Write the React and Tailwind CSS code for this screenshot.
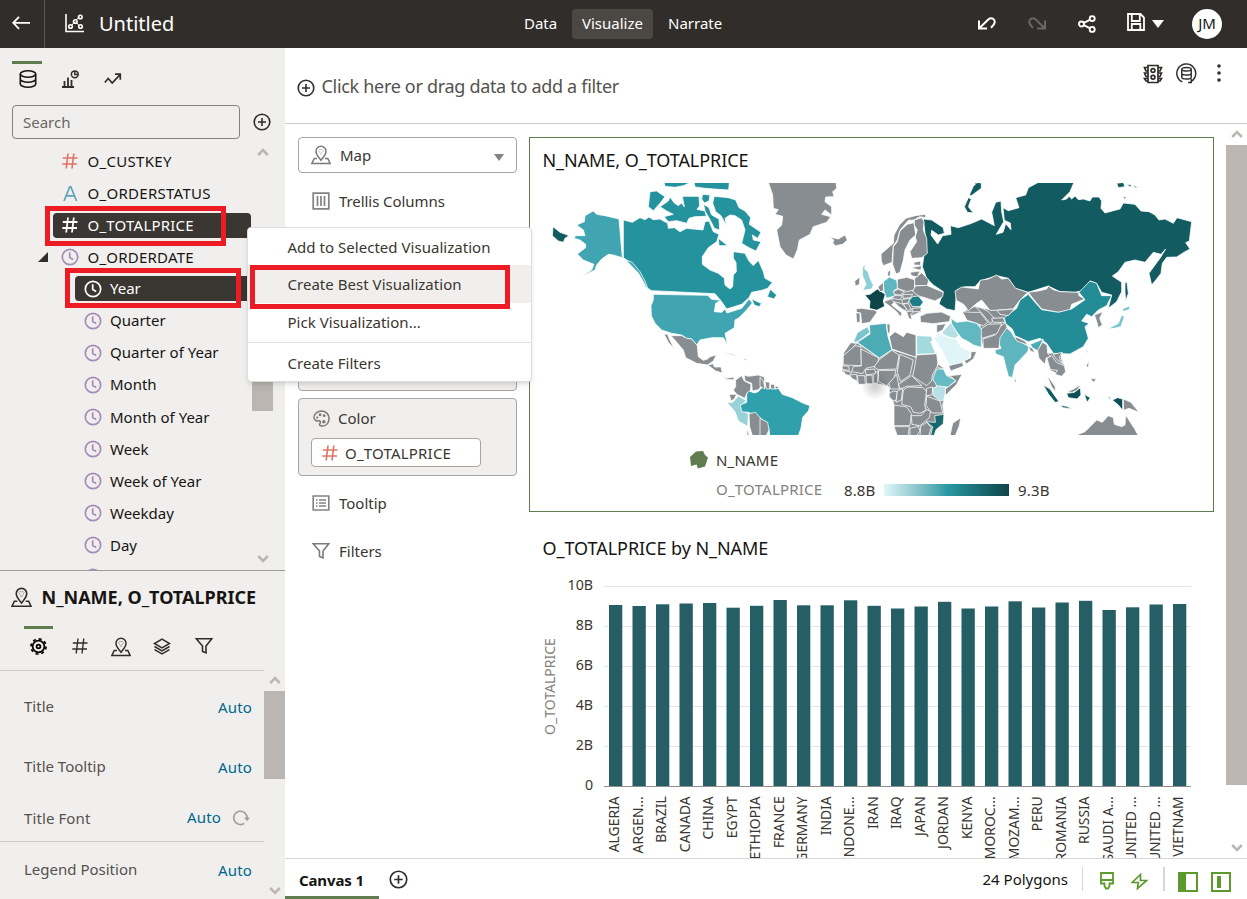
import React from "react";

const G = "#888d91";

const Svg = ({ w = 20, h = w, vb = "0 0 20 20", className = "", sw = 1.5, children }) => (
  <svg width={w} height={h} viewBox={vb} fill="none" stroke="currentColor" strokeWidth={sw} className={"shrink-0 " + className}>
    {children}
  </svg>
);

const Hash = ({ className = "", s = 16, sw = 1.6 }) => (
  <Svg w={s} vb="0 0 16 16" className={className} sw={sw}><path d="M6 0.5 4.2 15.5M11.8 0.5 10 15.5M0.8 5h14.7M0.3 11h14.7" /></Svg>
);
const Clock = ({ className = "" }) => (
  <Svg w={18} vb="0 0 18 18" className={className} sw={1.7}><circle cx="9" cy="9" r="7.7" /><path d="M8.7 4.2v5.2l3.5 2" /></Svg>
);
const Pin = ({ className = "", w = 20 }) => (
  <Svg w={w} className={className} sw={1.5}>
    <path d="M10 15.2C7.500 12 5 9.800 5 6.300a5 5 0 0 1 10 0C15 9.800 12.500 12 10 15.200z" />
    <path d="M6 13.500H3.200L.9 18.400h18.200l-2.300-4.900H14" />
    <path d="M7.300 5 10 9.500l2.700-4.500M8 4.500h4" strokeWidth=".5" opacity=".7" />
  </Svg>
);
const Funnel = ({ className = "" }) => (
  <Svg w={18} vb="0 0 18 18" className={className} sw={1.6}><path d="M1.200 1.700h15.600L11 9v6.800L7.500 14.500V9z" /></Svg>
);
const PlusCircle = ({ className = "", w = 18 }) => (
  <Svg w={w} vb="0 0 18 18" className={className} sw={1.6}><circle cx="9" cy="9" r="7.800" /><path d="M9 5v8M5 9h8" /></Svg>
);
const Arrow = ({ up, className = "" }) => (
  <Svg w={12} h={8} vb="0 0 12 8" className={"text-[#bbb6b2] " + className} sw={2.6}>
    <path d={up ? "M1.200 7 6 2.200 10.800 7" : "M1.200 1 6 5.800 10.800 1"} />
  </Svg>
);

const Header = () => (
  <header className="flex h-12 shrink-0 items-center bg-[#312d2a] pb-px text-white">
    <div className="-mb-px flex h-12 w-[45px] items-center border-r border-[#5d5956] pl-3">
      <Svg w={19} h={14} vb="0 0 19 14" className="mb-0.5" sw={1.8}><path d="M7 .8 1.200 6.800 7 12.800M1.200 6.800H18" /></Svg>
    </div>
    <Svg w={19} vb="0 0 19 19" className="ml-5" sw={1.6}>
      <path d="M1 0v17.500h18" /><path d="m6 12 4-4.500M11.500 8.500l2.500 3M11 6l3.500-3" strokeWidth="1" />
      <circle cx="5.500" cy="12.500" r="1.800" /><circle cx="10.300" cy="7.500" r="1.800" /><circle cx="15.300" cy="3" r="1.800" /><circle cx="15.500" cy="12.500" r="1.800" />
    </Svg>
    <div className="ml-[15px] w-[425px] text-[20px] leading-[48px]">Untitled</div>
    <div className="w-[48px] text-[15px]">Data</div>
    <div className="flex h-[30px] w-[81px] items-center justify-center rounded bg-[#4b4743] text-[15px]">Visualize</div>
    <div className="ml-[15px] w-[310px] text-[15px]">Narrate</div>
    <Svg w={18} h={13} vb="0 0 18 13" sw={2}><path d="M1 3.500v8h8M1.800 10.800 10.500 2.300c3-2.600 6.500 0 6.200 3-.2 2-1.500 3.200-3.700 5.500" /></Svg>
    <Svg w={18} h={13} vb="0 0 18 13" className="ml-8 text-[#6b6764]" sw={2}><path d="M17 3.500v8H9M16.200 10.800 7.500 2.300c-3-2.600-6.500 0-6.200 3 .2 2 1.500 3.200 3.700 5.500" /></Svg>
    <Svg w={18} vb="0 0 18 18" className="ml-8" sw={1.900}><circle cx="3.500" cy="9" r="2.500" /><circle cx="14.200" cy="3.600" r="2.500" /><circle cx="14.200" cy="14.400" r="2.500" /><path d="m5.800 7.800 6-3M5.800 10.200l6 3" /></Svg>
    <Svg w={18} h={18} vb="0 0 18 18" className="mb-[3px] ml-[31px]" sw={1.800}><path d="M1 1h12.500L17 4.500V17H1zM4.800 1v7h8V1M4.800 17v-6h8.500v6" /></Svg>
    <Svg w={12} h={8} vb="0 0 12 8" className="ml-[7px]" sw={0}><path d="M0 0h12L6 8z" fill="currentColor" /></Svg>
    <div className="ml-7 flex h-[30px] w-[30px] items-center justify-center rounded-full bg-white text-[15px] text-[#161513]">JM</div>
  </header>
);

const parts = ["Quarter", "Quarter of Year", "Month", "Month of Year", "Week", "Week of Year", "Weekday", "Day"];

const DataPanel = () => (
  <section className="flex h-[523px] shrink-0 flex-col border-b border-[#a09c99]">
    <div className="ml-3 mt-[13px] h-[3px] w-[30px] bg-[#5f7d4f]" />
    <div className="flex h-[41px] items-center pb-3 pl-[19px] text-[#312d2a]">
      <Svg w={18} h={18} vb="0 0 18 18" className="text-[#161513]" sw={1.600}>
        <ellipse cx="9" cy="4" rx="7.700" ry="3.200" /><path d="M1.300 4v10c0 1.800 3.500 3.200 7.700 3.200s7.700-1.400 7.700-3.200V4M1.300 9c0 1.800 3.500 3.200 7.700 3.200s7.700-1.400 7.700-3.200" />
      </Svg>
      <Svg w={17} h={18} vb="0 0 17 18" className="ml-[25px]" sw={1.500}>
        <path d="M0 17h12M2.500 16v-5M6 16V7.500M9.500 16v-6" strokeWidth="1.800" /><circle cx="12.800" cy="4.300" r="3.400" /><path d="M12.800 1v3.500h3.400" />
      </Svg>
      <Svg w={18} h={12} vb="0 0 18 12" className="ml-[25px]" sw={1.700}><path d="m.8 9.500 3.400-4 4 4.500L16.500 1.200M11 1.200h5.300v5.500" /></Svg>
    </div>
    <div className="flex items-center">
      <div className="ml-3 flex h-[34px] w-[228px] items-center rounded border border-[#85817e] pl-[10px] text-[15px] text-[#6a6663]">Search</div>
      <PlusCircle className="ml-[13px] text-[#312d2a]" />
    </div>
    <div className="flex h-[431px] overflow-hidden">
      <div className="w-[252px] shrink-0 pt-[6px] text-[15px] text-[#161513]">
        <div className="flex h-8 items-center pl-[62px]"><Hash className="text-[#dd7567]" /><span className="ml-[9.500px] tracking-[0.300px]">O_CUSTKEY</span></div>
        <div className="flex h-8 items-center pl-[63px]"><Svg w={15} h={15} vb="0 0 15 15" className="text-[#62a0b8]" sw={1.700}><path d="M1 15 6.800.8h1L13.600 15M3 9.800h8.500" /></Svg><span className="ml-[9.500px] tracking-[0.280px]">O_ORDERSTATUS</span></div>
        <div className="flex h-8 items-center pl-[53px]">
          <div className="flex h-[25px] w-[198px] items-center rounded bg-[#3a3631] pl-[9px] text-white"><Hash sw={1.800} /><span className="ml-[9.500px] tracking-[0.220px]">O_TOTALPRICE</span></div>
        </div>
        <div className="flex h-8 items-center pl-[38px]">
          <svg width="10" height="10" viewBox="0 0 10 10"><path d="M10 0v10H0z" fill="#312d2a" /></svg>
          <Clock className="ml-[13px] text-[#a78bb8]" /><span className="ml-[8.500px] tracking-[0.220px]">O_ORDERDATE</span>
        </div>
        <div className="flex h-8 items-center pb-px pl-[75px]">
          <div className="flex h-[25px] w-[177px] items-center rounded-l bg-[#3a3631] pl-[9px] text-white"><Clock /><span className="ml-2">Year</span></div>
        </div>
        <div className="-mt-[0.500px]">
          {parts.map((p) => (
            <div key={p} className="flex h-[32.100px] items-center pl-[84px]"><Clock className="text-[#a78bb8]" /><span className="ml-2">{p}</span></div>
          ))}
          <div className="flex h-8 items-center pl-[84px]"><Clock className="text-[#a78bb8]" /></div>
        </div>
      </div>
      <div className="flex w-[21px] flex-col items-center pt-[9px]">
        <Arrow up />
        <div className="mt-[198px] h-[57px] w-full shrink-0 bg-[#bbb6b2]" />
        <Arrow className="mt-[144px]" />
      </div>
    </div>
  </section>
);

const Prop = ({ name, h, extra, bar }) => (
  <div className={"flex items-center justify-between pl-6 text-[15px] " + h + (bar ? " border-b border-[#cfccc9]" : "")}>
    <span className={"text-[#55514e]" + (extra ? " pt-0.5 tracking-[0.100px]" : " pb-0.5")}>{name}</span>
    <span className="flex items-center pr-3 tracking-[0.150px] text-[#00688c]">
      Auto
      {extra && <Svg w={17} vb="0 0 16 16" className="ml-3 mr-[2px] text-[#a09c99]" sw={1.500}><path d="M10.500 13.600A6.300 6.300 0 1 1 13.300 8.500" /><path d="M10.500 8h5.500l-2.700 3.600z" fill="currentColor" stroke="none" /></Svg>}
    </span>
  </div>
);

const Settings = () => (
  <section className="flex min-h-0 flex-1 flex-col">
    <div className="flex h-[53px] items-center pb-px pl-[11px]"><Pin className="text-[#312d2a]" w={21} /><span className="ml-[9.500px] pt-px text-[18px] font-bold text-[#161513]">N_NAME, O_TOTALPRICE</span></div>
    <div className="ml-6 mt-0.5 h-[3px] w-[29px] bg-[#5f7d4f]" />
    <div className="flex h-[42px] w-[264px] shrink-0 items-start border-b border-[#cfccc9] pl-[30px] pt-[9px] text-[#312d2a]">
      <Svg w={17} vb="0 0 18 18" className="text-black" sw={1.900}>
        <circle cx="9" cy="9" r="6.200" /><circle cx="9" cy="9" r="8" strokeDasharray="3.140 3.140" strokeWidth="1.800" /><circle cx="9" cy="9" r="2" />
      </Svg>
      <Hash className="ml-[25px]" sw={1.400} />
      <Pin className="-mt-px ml-[23px]" w={20} />
      <Svg w={18} vb="0 0 18 18" className="ml-[22px]" sw={1.500}><path d="M9 1.200 16.500 5.500 9 9.800 1.500 5.500zM1.500 8.500 9 12.800l7.500-4.300M1.500 11.700 9 16l7.500-4.300" /></Svg>
      <Funnel className="-mt-px ml-[23.500px]" />
    </div>
    <div className="flex min-h-0 flex-1">
      <div className="w-[264px] shrink-0 overflow-hidden">
        <Prop name="Title" h="h-[73px]" />
        <Prop name="Title Tooltip" h="h-[47px]" />
        <Prop name="Title Font" h="h-[51px] pt-0.5" extra bar />
        <Prop name="Legend Position" h="h-[57px]" />
      </div>
      <div className="flex w-[21px] flex-col items-center pt-[5px]">
        <Arrow up />
        <div className="mt-[7px] h-[88px] w-full shrink-0 bg-[#bbb6b2]" />
        <Arrow className="mt-[108px]" />
      </div>
    </div>
  </section>
);

const Grammar = () => (
  <div className="ml-[13px] flex w-[219px] shrink-0 flex-col pt-[13px] text-[15px] text-[#3a3631]">
    <div className="flex h-9 items-center rounded border border-[#a8a4a1] pl-3">
      <Pin className="text-[#7d7976]" w={20} /><span className="ml-[9px]">Map</span>
      <svg width="10" height="7" viewBox="0 0 10 7" className="ml-auto mr-3 mt-1"><path d="M0 0h10L5 7z" fill="#85817e" /></svg>
    </div>
    <div className="mt-[18px] flex h-5 items-center pl-[14px]">
      <Svg w={18} vb="0 0 18 18" className="text-[#85817e]" sw={1.700}><path d="M1.200 1.200h15.600v15.600H1.200zM5.500 4v10M9 4v10M12.500 4v10" /></Svg><span className="ml-[9px] tracking-[-0.070px]">Trellis Columns</span>
    </div>
    <div className="mt-[29px] h-[151px] rounded border border-[#a8a4a1] bg-[#f1efed]" />
    <div className="mt-[7px] h-[78px] rounded border border-[#a8a4a1] bg-[#f1efed] pl-3 pt-[9px]">
      <div className="flex h-5 items-center pl-0.5">
        <Svg w={17} vb="0 0 18 18" className="text-[#7d7976]" sw={1.600}>
          <path d="M1 8.500C.8 4.500 4.500 1 9 1s8 3.500 8 8-3 8-6.500 8c-4.500 0-4-1.500-3-3s0-3-1.500-2.500S1.200 11 1 8.500z" />
          <g fill="currentColor" stroke="none"><circle cx="7.500" cy="5" r="1.500" /><circle cx="11.800" cy="6" r="1.500" /><circle cx="11.500" cy="12.500" r="1.800" /><circle cx="4.500" cy="8" r="1.200" /></g>
        </Svg><span className="ml-[8px]">Color</span>
      </div>
      <div className="mt-[10px] flex h-[29px] w-[170px] items-center rounded border border-[#a8a4a1] bg-white pl-[10px]"><Hash className="text-[#dd7567]" /><span className="ml-[7px] pt-px tracking-[0.200px]">O_TOTALPRICE</span></div>
    </div>
    <div className="mt-[17px] flex h-5 items-center pl-[14px]">
      <Svg w={18} vb="0 0 18 18" className="text-[#85817e]" sw={1.600}><path d="M1.200 2h15.600v14H1.200zM4 6h1.500M7 6h7M4 9h1.500M7 9h7M4 12h1.500M7 12h7" /></Svg><span className="ml-[9px]">Tooltip</span>
    </div>
    <div className="mt-7 flex h-5 items-center pl-[14px]"><Funnel className="text-[#7d7976]" /><span className="ml-[9px]">Filters</span></div>
  </div>
);

/* Country outlines, three units to a pixel, in three longitude bands. */
const west = [
  ["#25939e", "357,22 438,22 415,32 390,37 360,34"],
  ["#25939e", "447,22 553,22 551,45 520,43 480,40 450,36"],
  ["#25939e", "315,50 335,48 360,65 345,85 325,107 310,95"],
  ["#25939e", "345,95 370,78 375,66 388,84 400,92 410,84 418,96 412,64 462,64 464,92 456,103 480,108 484,124 450,125 432,130 425,145 395,137 370,140 357,125 385,118 365,108"],
  ["#25939e", "473,58 495,60 492,78 478,84 470,72"],
  ["#25939e", "476,88 492,98 500,120 522,132 524,165 508,160 494,132 480,108"],
  ["#25939e", "508,64 550,68 572,75 582,98 600,108 617,128 613,148 648,172 638,190 622,180 625,195 648,200 633,228 612,218 590,205 600,165 590,135 570,122 555,120 540,130 545,152 528,122 512,110 503,84"],
  ["#25939e", "520,190 548,212 522,212"],
  ["#25939e", "235,135 262,142 285,128 300,134 312,126 325,134 345,132 368,145 370,160 388,158 405,170 425,160 474,165 480,140 492,138 505,170 522,178 515,200 490,218 472,245 472,268 495,285 520,295 538,310 540,330 555,342 563,335 565,300 574,290 573,262 565,250 565,230 600,235 612,258 625,272 640,256 655,290 660,310 682,322 668,340 650,346 620,352 612,368 590,388 545,402 530,380 510,356 320,347 300,335 295,315 280,290 255,262 235,248"],
  ["#25939e", "667,365 676,343 695,360 687,372"],
  ["#25939e", "620,372 648,385 656,378 642,395 628,390"],
  ["#40a5b0", "95,150 118,140 120,122 145,108 155,118 180,122 222,132 232,248 205,240 190,238 170,252 155,270 150,285 108,305 140,285 147,268 115,255 97,237 122,218 122,208 105,195 87,190 92,182 120,182 115,165"],
  ["#40a5b0", "242,255 262,262 285,290 300,318 312,350 296,322 280,294"],
  ["#115b61", "24,155 45,172 62,178 72,182 60,190 55,202 40,198 22,182"],
  ["#40a5b0", "325,358 488,361 500,373 528,376 512,385 508,410 530,412 540,402 546,414 590,400 612,372 622,384 604,406 582,428 570,435 568,458 540,475 548,510 535,488 500,488 465,495 455,510 440,492 425,490 410,480 380,475 350,465 330,445 319,422 318,392 325,375"],
  [G, "378,482 410,482 425,490 440,492 457,512 460,545 475,556 488,552 495,545 514,540 505,558 488,570 455,565 422,548 415,525 398,505"],
  [G, "357,477 368,478 372,490 388,522 370,502"],
  [G, "488,570 505,566 508,576 528,576 532,594 512,588"],
  [G, "529,598 545,610 565,606 568,614 545,614"],
  [G, "535,532 560,536 582,546 555,538"], [G, "596,550 608,554 600,556"],
  [G, "572,615 590,602 598,618 618,628 616,650 605,655 600,670 575,658 565,645 572,635"],
  [G, "598,600 610,604 640,600 658,606 658,622 640,644 622,648 620,625 600,617"],
  [G, "553,658 575,658 568,672 558,678"],
  ["#98d2d8", "546,682 563,682 580,663 604,677 590,690 590,705 610,716 608,754 580,738 570,710"],
  ["#30a1ac", "605,657 612,648 628,654 640,650 655,632 672,640 700,640 712,658 742,668 775,685 795,692 790,708 773,727 768,760 760,782 674,782 672,762 655,738 640,724 610,712 590,710 586,690 605,682"],
  [G, "612,716 632,712 645,728 658,740 660,782 622,782 614,755"], [G, "606,760 613,782 606,782"],
  [G, "645,606 656,622 660,642 645,634"], [G, "660,620 674,622 674,642 664,642"], [G, "676,628 688,628 690,642 678,642"], [G, "690,632 703,637 692,643"],
  [G, "645,730 668,742 672,765 664,782 645,782"],
];
const mid = [
  [G, "25,22 228,22 230,40 218,50 222,65 197,66 195,80 215,95 215,120 195,105 185,118 212,125 200,142 160,155 150,178 118,195 112,225 100,252 78,240 60,215 50,165 65,150 68,124 45,118 55,104 40,100 38,60"],
  [G, "208,186 235,192 255,180 262,195 248,208 226,212 218,204 222,196"],
  [G, "363,237 388,215 400,205 402,180 418,150 438,130 465,122 496,118 498,128 480,125 462,135 445,136 433,150 420,165 412,195 400,212 396,262 370,272 364,258"],
  [G, "442,148 462,143 467,180 450,195 435,225 430,255 420,292 408,297 398,268 400,215 412,200 420,168"],
  [G, "463,135 485,128 492,140 490,165 500,190 502,235 485,248 455,250 450,230 470,200 466,185 472,165 463,150"],
  [G, "384,290 392,284 390,304 382,302"],
  ["#8dcfd6", "308,275 316,270 314,282 324,290 330,310 340,330 335,342 308,346 318,328 307,300"],
  [G, "284,318 300,306 298,328 286,334"],
  [G, "400,345 462,345 500,368 475,366 480,396 484,410 455,422 440,412 425,395 400,382 372,378 395,370"],
  ["#0e454a", "314,360 330,358 352,342 376,358 370,378 374,394 350,406 328,400 330,378"],
  ["#5fb8c1", "370,320 388,306 410,316 414,340 400,348 406,362 380,370 372,350"],
  [G, "412,313 440,307 464,314 463,345 440,350 412,340"],
  [G, "354,336 370,322 370,348 360,350"], [G, "400,350 415,342 434,352 420,360 405,358"], [G, "395,370 405,362 427,362 420,374"],
  [G, "428,358 458,358 452,368 430,370"], [G, "425,374 450,369 445,384 428,386"],
  [G, "370,380 395,372 402,382 395,390 426,414 422,426 410,410 385,390"],
  [G, "402,380 425,386 440,398 436,408 418,396"], [G, "430,386 445,386 454,404 442,406"], [G, "440,410 464,408 452,418 456,434 446,430"],
  [G, "456,400 485,398 480,410 458,410"],
  ["#1c7d87", "446,378 458,365 475,363 490,381 480,395 457,394"],
  [G, "464,310 485,293 506,315 502,332 464,332"], [G, "450,292 480,288 472,306 455,302"], [G, "452,278 485,272 482,286"], [G, "462,262 482,258 482,271 462,270"],
  [G, "458,350 466,333 500,331 550,352 548,365 525,378 500,370 475,362"],
  [G, "288,402 305,400 342,405 352,410 330,442 305,446 302,414 290,412"], [G, "288,414 300,414 300,442 290,442"],
  [G, "480,424 500,415 545,411 572,424 568,440 520,446 482,442"],
  [G, "530,450 558,446 548,465 530,474"], ["#1c7d87", "524,484 540,474 536,480"],
  ["#b5dfe5", "555,462 573,443 596,482 585,490 565,486 545,475"],
  ["#62b8c1", "573,430 590,442 620,438 650,445 664,462 664,517 640,510 625,500 605,490 590,470 575,447"],
  ["#dff5f8", "521,488 545,478 565,488 590,492 602,515 632,530 628,548 592,568 568,572 548,530"],
  [G, "633,530 650,530 640,552 620,566 612,558 632,548"], [G, "566,572 608,562 610,574 572,588"],
  [G, "250,540 272,503 292,504 358,549 396,524 468,547 530,536 535,570 560,602 578,604 556,640 552,674 548,690 552,718 540,746 518,782 412,782 402,752 406,722 402,690 398,676 388,666 388,638 382,632 340,624 300,628 268,600 246,590"],
  ["#7cc5cd", "280,502 292,473 322,455 330,472 293,500"],
  ["#4bacb6", "292,502 330,477 328,450 378,445 384,485 396,524 358,549"],
  [G, "380,448 390,446 390,470 384,478"],
  [G, "388,485 405,470 430,485 440,472 468,480 468,547 396,522"],
  ["#a3dadd", "470,482 515,484 518,498 512,500 527,536 470,538"],
  [G, "248,538 272,503 290,505 262,540"], [G, "250,542 285,512 303,515 304,572 250,570"],
  [G, "303,522 356,549 352,572 318,580 308,596 275,590 280,574 304,573"],
  [G, "358,554 395,526 417,540 410,582 355,584 342,576"],
  [G, "420,538 460,555 450,600 422,620 412,592"],
  [G, "470,540 530,536 534,570 517,600 515,618 500,632 458,604 464,575"],
  ["#65bac3", "530,582 550,582 560,602 588,616 565,636 532,636 518,612"],
  [G, "532,566 556,582 534,578"],
  [G, "355,586 408,586 402,612 380,632 356,620"],
  [G, "246,572 266,574 268,586 248,584"], [G, "250,586 275,592 268,602 256,598"], [G, "268,600 290,598 292,618 278,612"], [G, "292,602 314,602 316,628 295,628"], [G, "316,584 344,582 348,596 318,600"], [G, "318,602 336,600 338,626 320,626"], [G, "340,600 354,588 352,624 342,624"],
  [G, "386,626 410,598 418,642 392,642"], [G, "416,628 455,602 486,632 440,634 420,642"],
  [G, "388,655 400,648 412,650 408,678 398,676 388,666"], [G, "412,648 428,640 424,675 408,682"],
  [G, "430,645 445,636 490,638 500,650 494,690 498,705 480,715 460,712 452,695 425,688"],
  [G, "402,690 440,696 454,716 450,752 402,752"], [G, "454,722 484,722 498,704 512,708 508,728 480,752 456,748"],
  [G, "500,664 540,678 548,714 516,714 498,692"], [G, "500,640 518,636 516,660 498,662"],
  ["#b5e0e6", "518,640 535,632 558,636 552,674 542,678 520,662"],
  [G, "606,598 590,628 556,662 556,642 588,618 570,602"],
  ["#17686f", "524,722 552,718 550,746 528,764 522,782 512,782 518,755 498,740 526,742"],
  [G, "602,728 598,752 586,782 570,782 578,745"],
  [G, "402,755 448,755 444,782 412,782"], [G, "450,760 475,754 480,768 470,782 450,782"], [G, "482,754 500,742 514,758 506,782 480,782"],
  ["#115b61", "640,34 652,22 664,24 664,40 634,62 628,60"], ["#115b61", "613,95 625,68 634,72 625,95 640,114 622,112"],
];
const east = [
  ["#115b61", "-155,132 -130,135 -95,158 -92,175 -110,180 -130,166 -132,180 -112,207 -97,182 -72,178 -74,152 -50,158 -10,145 20,132 58,152 50,112 62,82 78,78 80,110 86,140 64,178 84,172 92,146 108,164 106,144 88,136 84,98 100,107 132,98 122,68 152,60 160,38 190,22 297,22 285,50 260,75 275,72 282,64 290,72 300,63 310,74 325,72 345,78 352,66 372,66 380,78 378,100 390,114 412,108 435,102 445,84 480,88 498,108 522,110 540,120 552,135 570,132 595,145 606,128 650,140 643,198 632,203 645,222 630,230 605,246 575,247 562,265 558,295 545,312 530,330 522,295 540,270 555,250 572,222 558,238 535,232 510,262 480,255 450,262 430,290 412,303 440,322 440,350 425,380 400,400 410,360 380,352 365,325 345,318 330,345 300,352 255,350 220,333 160,352 120,340 100,310 65,302 15,318 0,335 -30,335 -55,345 -57,370 -60,407 -85,402 -108,387 -100,365 -95,350 -125,330 -145,310 -158,275 -150,220 -148,190"],
  ["#115b61", "450,322 456,322 460,355 452,378 450,350"], ["#115b61", "0,22 20,22 4,46 0,42"],
  ["#115b61", "425,25 445,22 450,35 430,38"], ["#115b61", "455,30 468,28 468,36"], ["#115b61", "475,30 490,38 480,38"], ["#115b61", "445,64 455,68 448,72"],
  [G, "-36,410 0,394 45,404 118,402 92,428 92,456 60,482 25,520 12,470 16,452 -10,440"],
  [G, "200,505 218,535 262,532 258,548 270,575 262,604 226,586 216,552"],
  [G, "-60,348 -40,336 10,342 15,316 40,312 65,300 80,312 100,310 122,340 158,352 135,375 115,402 60,406 45,406 20,375 5,385 -20,407 -34,388 -56,376"],
  [G, "160,352 190,348 215,342 220,333 235,344 255,350 310,352 312,362 330,372 290,388 285,405 250,412 200,402 180,378"],
  ["#238c97", "88,428 125,400 135,375 160,358 180,382 200,404 250,412 290,402 330,374 312,352 345,318 365,325 380,362 410,362 395,392 370,405 350,425 335,418 320,438 342,445 330,455 340,490 325,515 285,537 235,535 215,505 195,490 160,500 120,482 112,462 92,446"],
  ["#5fb5be", "62,482 80,468 92,456 108,470 120,490 162,515 158,530 120,570 112,608 100,604 85,545 62,537 60,525 78,520"],
  ["#4bacb6", "166,508 205,492 196,512 190,528 172,518"],
  [G, "118,484 150,498 158,510 125,498"], [G, "160,514 172,520 180,534 166,528"], [G, "118,605 125,622 118,620"],
  [G, "24,492 60,480 68,458 92,444 96,458 75,488 72,520 25,520"], [G, "12,465 40,448 80,446 66,476 20,490"],
  [G, "-38,410 -10,412 15,412 38,442 25,452 -10,440 -24,436"], [G, "0,394 20,400 38,408 58,430 46,446 20,414"],
  [G, "66,406 118,402 100,422 75,418"], [G, "50,430 85,428 90,442 54,442"],
  [G, "188,527 202,502 216,510 218,535 228,545 214,548 210,568 192,550"],
  [G, "216,550 230,542 244,562 268,572 272,590 260,604 240,598 248,586 226,584"], [G, "234,538 262,532 252,548 264,566 246,554"],
  [G, "216,602 226,614 240,634 242,650 230,636"],
  ["#115b61", "205,630 225,642 252,680 240,682 220,657"], ["#115b61", "253,690 275,694 292,702 265,698"],
  [G, "276,650 296,642 318,628 306,646 292,652"], ["#0f5056", "275,655 298,652 316,638 318,660 306,672 280,668"],
  ["#115b61", "328,658 346,668 336,682"], ["#115b61", "400,664 408,670 402,672"],
  ["#0f5056", "412,675 428,668 443,672 443,706 430,690"], [G, "445,672 468,682 492,712 462,700 446,706"],
  [G, "334,524 339,532 334,532"], [G, "334,572 342,556 340,580"], [G, "345,610 364,612 356,622"],
  [G, "305,780 330,770 365,735 382,742 400,722 415,728 418,748 440,755 450,750 452,720 468,745 478,760 490,782 305,782"],
  ["#7cc5cd", "442,402 465,392 462,405 445,409"], ["#7cc5cd", "398,462 430,445 440,420 448,425 438,455 418,460"],
  [G, "358,420 384,410 374,430 382,450 370,458 364,436"],
];
const Band = ({ dx, items }) => (
  <g transform={`translate(${dx} -8) scale(.33333)`}>
    {items.map(([c, pts], i) => <polygon key={i} points={pts} fill={c} />)}
  </g>
);
const WorldMap = () => (
  <svg width="660" height="252" viewBox="0 0 660 252" className="block overflow-hidden">
    <defs><radialGradient id="spot"><stop offset="0" stopColor="#000" stopOpacity=".2" /><stop offset="1" stopColor="#000" stopOpacity="0" /></radialGradient></defs>
    <g stroke="#fff" strokeWidth="2.300" strokeLinejoin="round">
      <Band dx={2} items={west} /><Band dx={432} items={east} /><Band dx={217} items={mid} />
    </g>
    <circle cx="332" cy="203" r="14" fill="url(#spot)" />
  </svg>
);

const bars = [
  ["ALGERIA", 605], ["ARGEN...", 606], ["BRAZIL", 604.3], ["CANADA", 603.5], ["CHINA", 603], ["EGYPT", 607.7], ["ETHIOPIA", 605.800],
  ["FRANCE", 600], ["GERMANY", 605.300], ["INDIA", 605.300], ["INDONE...", 600.300], ["IRAN", 605.800], ["IRAQ", 608.500], ["JAPAN", 606.500],
  ["JORDAN", 601.800], ["KENYA", 608.500], ["MOROC...", 606.500], ["MOZAM...", 601.300], ["PERU", 607.500], ["ROMANIA", 602.500],
  ["RUSSIA", 600.800], ["SAUDI A...", 610], ["UNITED ...", 607.300], ["UNITED ...", 604.500], ["VIETNAM", 604],
];
const BarChart = () => (
  <svg width="685" height="281" viewBox="529 577 685 281" className="block" fontFamily='"Noto Sans", sans-serif' fontSize="14" fill="#3a3631">
    {["10B", "8B", "6B", "4B", "2B", "0"].map((t, i) => (
      <g key={t}>
        <path d={`M604 ${586.5 + i * 40}H1191`} stroke={i === 5 ? "#8f8f8f" : "#e4e6ec"} />
        <text x="593" y={590 + i * 40} textAnchor="end" fontSize="14.200">{t}</text>
      </g>
    ))}
    <text transform="translate(555 686.500) rotate(-90)" textAnchor="middle" fill="#85817e" fontSize="14">O_TOTALPRICE</text>
    {bars.map(([t, y], i) => (
      <g key={i}>
        <rect x={609 + i * 23.5} y={y} width="13.300" height={786 - y} fill="#255e65" />
        <text transform={`translate(${619 + i * 23.5} 796.300) rotate(-90)`} textAnchor="end" fontSize="13.900">{t}</text>
      </g>
    ))}
  </svg>
);

const Footer = () => (
  <footer className="flex h-[41px] shrink-0 items-center border-t border-[#d9d7d5] text-[15px] text-[#161513]">
    <div className="flex h-10 w-[94px] items-center justify-center border-b-[3px] border-[#5f7d4f] pr-px pt-[5px] font-bold tracking-[-0.100px]">Canvas 1</div>
    <PlusCircle className="ml-[10px] text-[#312d2a]" w={19} />
    <div className="ml-auto">24 Polygons</div>
    <div className="ml-[14px] h-6 w-px bg-[#d9d7d5]" />
    <Svg w={14} h={18} vb="0 0 14 18" className="ml-[17px] mt-1 text-[#5c9a2c]" sw={1.800}><path d="M1 1h12v10.500H9.500V14L8 16.500H6L4.500 14v-2.500H1zM1 8h12" /></Svg>
    <Svg w={17} h={17} vb="0 0 17 17" className="ml-[17px] mt-1 text-[#5c9a2c]" sw={1.700}><path d="m9.500 1.500-8.300 8h6L6.500 15.500l9.300-8H9.500z" /></Svg>
    <div className="ml-[15px] h-6 w-0.5 bg-[#d9d7d5]" />
    <Svg w={20} vb="0 0 20 20" className="ml-[13px] mt-[6px] text-[#5c9a2c]" sw={2}><path d="M1 1h18v18H1z" /><path d="M1 1h7v18H1z" fill="currentColor" stroke="none" /></Svg>
    <Svg w={20} vb="0 0 20 20" className="ml-[13px] mr-[16px] mt-[6px] text-[#5c9a2c]" sw={2}><path d="M1 1h18v18H1z" /><path d="M6 4h4v12H6z" fill="currentColor" stroke="none" /></Svg>
  </footer>
);

const Menu = () => (
  <div className="absolute left-[247px] top-[227px] h-[155px] w-[285px] rounded border border-[#e0dedb] bg-white pt-px text-[15px] text-[#3a3631] shadow-md">
    <div className="flex h-9 items-center pl-[39.500px] tracking-[0.030px]">Add to Selected Visualization</div>
    <div className="flex h-[38px] items-center bg-[#f1efed] pl-[39.500px] tracking-[0.030px]">Create Best Visualization</div>
    <div className="flex h-[40px] items-center border-b border-[#e0dedb] pl-[39.500px] tracking-[0.030px]">Pick Visualization...</div>
    <div className="flex h-10 items-center pl-[39.500px] tracking-[0.030px]">Create Filters</div>
  </div>
);

export default function App() {
  return (
    <div className="relative flex h-[899px] w-[1247px] flex-col overflow-hidden bg-white font-['Noto_Sans',sans-serif]">
      <Header />
      <div className="flex min-h-0 flex-1">
        <aside className="flex w-[285px] shrink-0 flex-col bg-[#f1efed]"><DataPanel /><Settings /></aside>
        <main className="flex min-w-0 flex-1 flex-col">
          <div className="flex h-[76px] shrink-0 items-center border-b border-[#cfccc9] pl-[11.500px] text-[#312d2a]">
            <PlusCircle className="mt-1" />
            <span className="ml-[7px] pt-0.5 text-[18px] tracking-[-0.310px] text-[#55514e]">Click here or drag data to add a filter</span>
            <Svg w={20} vb="0 0 20 20" className="mb-6 ml-auto" sw={1.700}><path d="M5 1.500h10v17H5zM5 3.500H1.500L3 7h2M5 9H1.500L3 12.500h2M5 14.500H1.500L3 17h2M15 3.500h3.500L17 7h-2M15 9h3.500L17 12.500h-2M15 14.500h3.500L17 17h-2" /><circle cx="10" cy="6.500" r="1.900" /><circle cx="10" cy="13.300" r="1.900" /></Svg>
            <Svg w={21} vb="0 0 20 20" className="mb-6 ml-[13px]" sw={1.400}><path d="M6 18A9 9 0 1 1 14.500 17.500M14.500 15v3.500h-3" /><ellipse cx="10" cy="6" rx="4.500" ry="1.700" /><path d="M5.500 6v7.500c0 1 2 1.700 4.500 1.700s4.500-.7 4.500-1.700V6M5.500 9.700c0 1 2 1.700 4.500 1.700s4.500-.7 4.500-1.700" /></Svg>
            <svg width="4" height="18" viewBox="0 0 4 18" className="mb-[26px] ml-5 mr-[26.500px]" fill="#312d2a"><circle cx="2" cy="2" r="1.800" /><circle cx="2" cy="9" r="1.800" /><circle cx="2" cy="16" r="1.800" /></svg>
          </div>
          <div className="flex min-h-0 flex-1 overflow-hidden">
            <Grammar />
            <div className="ml-3 flex w-[685px] shrink-0 flex-col pt-[13px]">
              <section className="flex h-[375px] shrink-0 flex-col border border-[#5f7d4f] pl-[13px]">
                <h2 className="-ml-[0.500px] h-[45px] pt-[9px] text-[18px] leading-[27px] tracking-[-0.060px] text-[#161513]">N_NAME, O_TOTALPRICE</h2>
                <WorldMap />
                <div className="mt-[15px] flex h-5 items-center pl-[146px] text-[15px] text-[#3a3631]">
                  <svg width="20" height="19" viewBox="0 0 20 19" className="mb-0.5"><path d="M1 7 7 1.500 14 1l2 4 3 2.500-3 9-7 2-1.500-4L2 16z" fill="#5f7d4f" /></svg>
                  <span className="ml-[7px] tracking-[0.200px]">N_NAME</span>
                </div>
                <div className="mt-[9px] flex h-5 items-center pl-[173px] text-[15px] text-[#3a3631]">
                  <span className="w-[128px] tracking-[0.220px] text-[#85817e]">O_TOTALPRICE</span><span className="w-[40px] pt-0.5 tracking-[0.100px]">8.8B</span>
                  <span className="mt-px h-3 w-[125px] bg-linear-to-r from-[#dff7f9] via-[#2a9aa5] to-[#0e454a]" /><span className="ml-[9px] pt-0.5 tracking-[0.200px]">9.3B</span>
                </div>
              </section>
              <h2 className="mt-[23px] h-[42px] shrink-0 pl-[13.500px] text-[18px] leading-[27px] tracking-[-0.050px] text-[#161513]">O_TOTALPRICE by N_NAME</h2>
              <BarChart />
            </div>
            <div className="ml-3 flex w-[21px] shrink-0 flex-col items-center pt-[6px]">
              <Arrow up />
              <div className="mt-[7px] h-[640px] w-full shrink-0 bg-[#bbb6b2]" />
              <Arrow className="mt-[59px]" />
            </div>
          </div>
          <Footer />
        </main>
      </div>
      <Menu />
      <div className="absolute left-[45px] top-[206px] h-10 w-[181px] border-[5px] border-[#ed1c24]" />
      <div className="absolute left-[65px] top-[268px] h-10 w-[176px] border-[5px] border-[#ed1c24]" />
      <div className="absolute left-[250px] top-[265px] h-11 w-[260px] border-[5px] border-[#ed1c24]" />
    </div>
  );
}
